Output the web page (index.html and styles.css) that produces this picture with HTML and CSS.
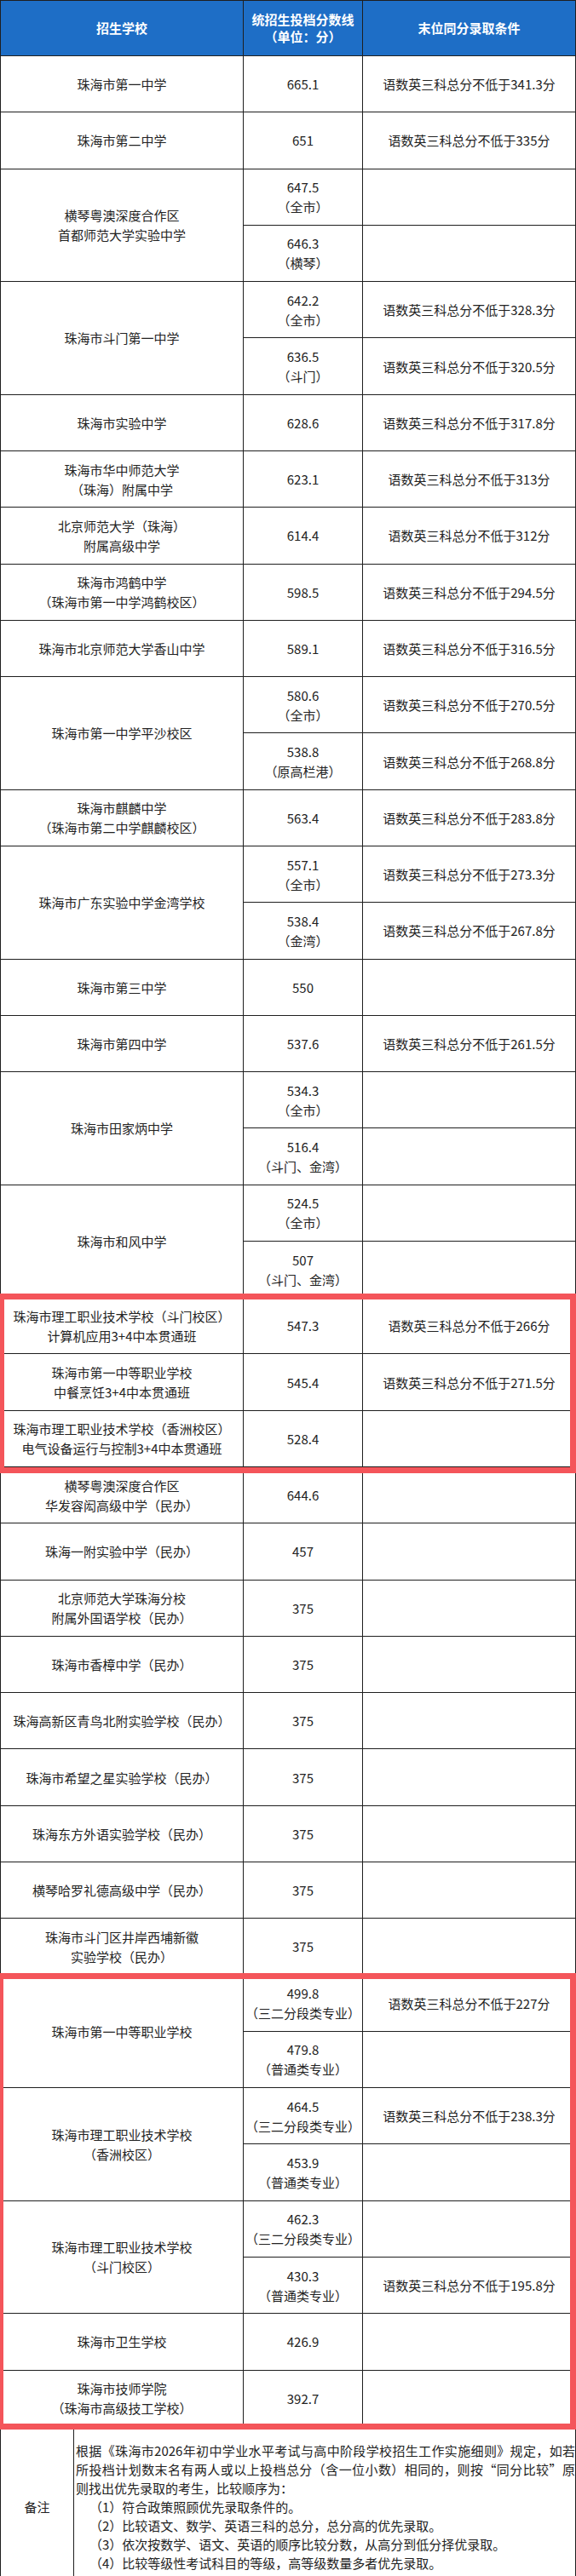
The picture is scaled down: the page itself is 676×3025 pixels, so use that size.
FILE: index.html
```html
<!DOCTYPE html>
<html lang="zh-CN">
<head>
<meta charset="utf-8">
<title>珠海市统招生投档分数线</title>
<link rel="stylesheet" href="styles.css">
</head>
<body>
<div class="sheet">
  <div class="grid">
    <div class="h">招生学校</div>
    <div class="h">统招生投档分数线<br>（单位：分）</div>
    <div class="h">末位同分录取条件</div>

    <div class="c">珠海市第一中学</div><div class="c">665.1</div><div class="c">语数英三科总分不低于341.3分</div>
    <div class="c">珠海市第二中学</div><div class="c">651</div><div class="c">语数英三科总分不低于335分</div>

    <div class="c r2">横琴粤澳深度合作区<br>首都师范大学实验中学</div><div class="c">647.5<br>（全市）</div><div class="c"></div>
    <div class="c">646.3<br>（横琴）</div><div class="c"></div>

    <div class="c r2">珠海市斗门第一中学</div><div class="c">642.2<br>（全市）</div><div class="c">语数英三科总分不低于328.3分</div>
    <div class="c">636.5<br>（斗门）</div><div class="c">语数英三科总分不低于320.5分</div>

    <div class="c">珠海市实验中学</div><div class="c">628.6</div><div class="c">语数英三科总分不低于317.8分</div>
    <div class="c">珠海市华中师范大学<br>（珠海）附属中学</div><div class="c">623.1</div><div class="c">语数英三科总分不低于313分</div>
    <div class="c">北京师范大学（珠海）<br>附属高级中学</div><div class="c">614.4</div><div class="c">语数英三科总分不低于312分</div>
    <div class="c">珠海市鸿鹤中学<br>（珠海市第一中学鸿鹤校区）</div><div class="c">598.5</div><div class="c">语数英三科总分不低于294.5分</div>
    <div class="c">珠海市北京师范大学香山中学</div><div class="c">589.1</div><div class="c">语数英三科总分不低于316.5分</div>

    <div class="c r2">珠海市第一中学平沙校区</div><div class="c">580.6<br>（全市）</div><div class="c">语数英三科总分不低于270.5分</div>
    <div class="c">538.8<br>（原高栏港）</div><div class="c">语数英三科总分不低于268.8分</div>

    <div class="c">珠海市麒麟中学<br>（珠海市第二中学麒麟校区）</div><div class="c">563.4</div><div class="c">语数英三科总分不低于283.8分</div>

    <div class="c r2">珠海市广东实验中学金湾学校</div><div class="c">557.1<br>（全市）</div><div class="c">语数英三科总分不低于273.3分</div>
    <div class="c">538.4<br>（金湾）</div><div class="c">语数英三科总分不低于267.8分</div>

    <div class="c">珠海市第三中学</div><div class="c">550</div><div class="c"></div>
    <div class="c">珠海市第四中学</div><div class="c">537.6</div><div class="c">语数英三科总分不低于261.5分</div>

    <div class="c r2">珠海市田家炳中学</div><div class="c">534.3<br>（全市）</div><div class="c"></div>
    <div class="c">516.4<br>（斗门、金湾）</div><div class="c"></div>

    <div class="c r2">珠海市和风中学</div><div class="c">524.5<br>（全市）</div><div class="c"></div>
    <div class="c">507<br>（斗门、金湾）</div><div class="c"></div>

    <div class="c">珠海市理工职业技术学校（斗门校区）<br>计算机应用3+4中本贯通班</div><div class="c">547.3</div><div class="c">语数英三科总分不低于266分</div>
    <div class="c">珠海市第一中等职业学校<br>中餐烹饪3+4中本贯通班</div><div class="c">545.4</div><div class="c">语数英三科总分不低于271.5分</div>
    <div class="c">珠海市理工职业技术学校（香洲校区）<br>电气设备运行与控制3+4中本贯通班</div><div class="c">528.4</div><div class="c"></div>

    <div class="c">横琴粤澳深度合作区<br>华发容闳高级中学（民办）</div><div class="c">644.6</div><div class="c"></div>
    <div class="c">珠海一附实验中学（民办）</div><div class="c">457</div><div class="c"></div>
    <div class="c">北京师范大学珠海分校<br>附属外国语学校（民办）</div><div class="c">375</div><div class="c"></div>
    <div class="c">珠海市香樟中学（民办）</div><div class="c">375</div><div class="c"></div>
    <div class="c">珠海高新区青鸟北附实验学校（民办）</div><div class="c">375</div><div class="c"></div>
    <div class="c">珠海市希望之星实验学校（民办）</div><div class="c">375</div><div class="c"></div>
    <div class="c">珠海东方外语实验学校（民办）</div><div class="c">375</div><div class="c"></div>
    <div class="c">横琴哈罗礼德高级中学（民办）</div><div class="c">375</div><div class="c"></div>
    <div class="c">珠海市斗门区井岸西埔新徽<br>实验学校（民办）</div><div class="c">375</div><div class="c"></div>

    <div class="c r2">珠海市第一中等职业学校</div><div class="c">499.8<br>（三二分段类专业）</div><div class="c">语数英三科总分不低于227分</div>
    <div class="c">479.8<br>（普通类专业）</div><div class="c"></div>

    <div class="c r2">珠海市理工职业技术学校<br>（香洲校区）</div><div class="c">464.5<br>（三二分段类专业）</div><div class="c">语数英三科总分不低于238.3分</div>
    <div class="c">453.9<br>（普通类专业）</div><div class="c"></div>

    <div class="c r2">珠海市理工职业技术学校<br>（斗门校区）</div><div class="c">462.3<br>（三二分段类专业）</div><div class="c"></div>
    <div class="c">430.3<br>（普通类专业）</div><div class="c">语数英三科总分不低于195.8分</div>

    <div class="c">珠海市卫生学校</div><div class="c">426.9</div><div class="c"></div>
    <div class="c">珠海市技师学院<br>（珠海市高级技工学校）</div><div class="c">392.7</div><div class="c"></div>

    <div class="mark m1"></div>
    <div class="mark m2"></div>
  </div>

  <div class="notes">
    <div class="nl">备注</div>
    <div class="nt">
      <span class="ln j">根据《珠海市2026年初中学业水平考试与高中阶段学校招生工作实施细则》规定，如若</span>
      <span class="ln j">所投档计划数末名有两人或以上投档总分（含一位小数）相同的，则按“同分比较”原</span>
      <span class="ln">则找出优先录取的考生，比较顺序为：</span>
      <span class="ln it">（1）符合政策照顾优先录取条件的。</span>
      <span class="ln it">（2）比较语文、数学、英语三科的总分，总分高的优先录取。</span>
      <span class="ln it">（3）依次按数学、语文、英语的顺序比较分数，从高分到低分择优录取。</span>
      <span class="ln it">（4）比较等级性考试科目的等级，高等级数量多者优先录取。</span>
    </div>
  </div>
</div>
</body>
</html>
```

FILE: styles.css
```css
html, body {
  margin: 0;
  padding: 0;
  background: #fff;
}

body {
  font-family: "Noto Sans CJK SC", "Noto Sans", sans-serif;
  font-size: 15px;
  color: #222;
}

.sheet {
  width: 676px;
}

.grid {
  position: relative;
  display: grid;
  grid-template-columns: 284px 139px 249px;
  grid-template-rows: 64px;
  grid-auto-rows: 65.29px;
  gap: 1px;
  padding: 1px;
  background: #1f1f1f;
}

.h {
  background: #1e6ec6;
  color: #fff;
  font-weight: 700;
  line-height: 20px;
  display: flex;
  align-items: center;
  justify-content: center;
  text-align: center;
}

.c {
  background: #fff;
  line-height: 23px;
  display: flex;
  align-items: center;
  justify-content: center;
  text-align: center;
  white-space: nowrap;
}

.r2 {
  grid-row: span 2;
}

.mark {
  position: absolute;
  grid-column: 1 / -1;
  border: 7px solid #f4555a;
  pointer-events: none;
}

.m1 {
  grid-row: 24 / 27;
  top: -5px;
  bottom: -8px;
  left: -3px;
  right: -1px;
}

.m2 {
  grid-row: 36 / 44;
  top: -3px;
  bottom: -4px;
  left: -4px;
  right: -1px;
}

.notes {
  display: grid;
  grid-template-columns: 85px 588px;
  gap: 1px;
  padding: 0 1px 1px;
  background: #1f1f1f;
}

.nl {
  background: #fff;
  display: flex;
  align-items: center;
  justify-content: center;
}

.nt {
  background: #fff;
  padding: 17px 0 17px 2px;
  line-height: 22px;
}

.ln {
  display: block;
  white-space: nowrap;
}

.j {
  text-align: justify;
  text-align-last: justify;
}

.it {
  padding-left: 16px;
}
```
